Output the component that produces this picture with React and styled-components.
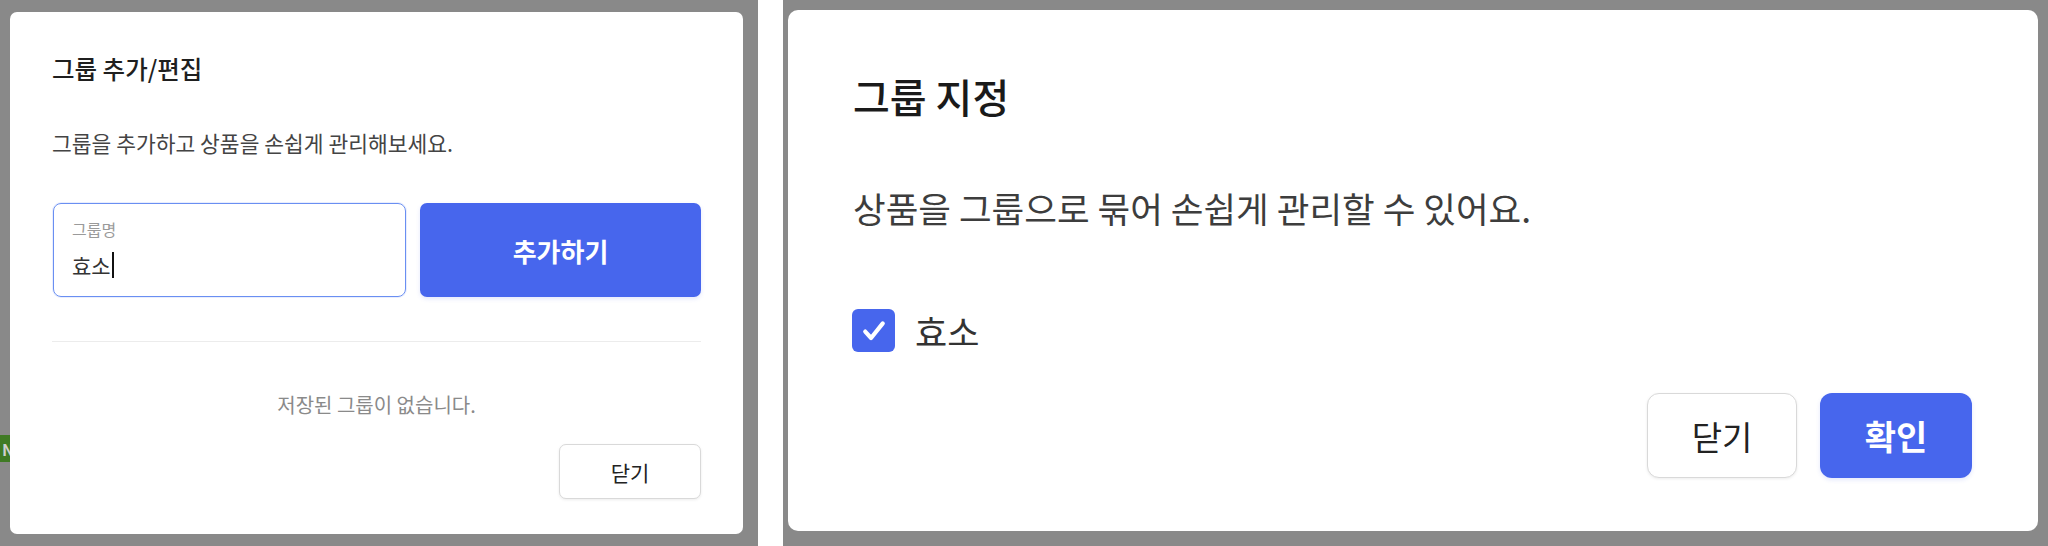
import styled, { createGlobalStyle } from 'styled-components';

const GlobalStyle = createGlobalStyle`
    * { box-sizing: border-box; }
    body {
        margin: 0;
        font-family: "Noto Sans CJK KR", "Noto Sans", sans-serif;
        background: #fff;
    }
`;

const FONT = `"Noto Sans CJK KR", "Noto Sans", sans-serif`;
const BLUE = '#4766ed';

const App = () => {
    return (
        <>
        <GlobalStyle />
        <Page>
            <Backdrop $pad="12px 15px 12px 10px" $width="758px">
                <Behind $left="-6px" $top="435px"><GreenBadge>N</GreenBadge></Behind>

                <EditDialog>
                    <SmallTitle>그룹 추가/편집</SmallTitle>
                    <SmallDesc>그룹을 추가하고 상품을 손쉽게 관리해보세요.</SmallDesc>
                    <InputRow>
                        <FakeInput>
                            <InputLabel>그룹명</InputLabel>
                            <InputValue>효소<Caret /></InputValue>
                        </FakeInput>
                        <PrimaryButton $size="26px" $radius="7px">추가하기</PrimaryButton>
                    </InputRow>
                    <Divider />
                    <EmptyText>저장된 그룹이 없습니다.</EmptyText>
                    <Footer $gap="0">
                        <GhostButton $w="142px" $h="55px" $size="21px" $radius="7px">닫기</GhostButton>
                    </Footer>
                </EditDialog>
            </Backdrop>

            <Strip />

            <Backdrop $pad="10px 10px 15px 5px" $width="1265px">
                <AssignDialog>
                    <BigTitle>그룹 지정</BigTitle>
                    <BigDesc>상품을 그룹으로 묶어 손쉽게 관리할 수 있어요.</BigDesc>
                    <CheckRow>
                        <CheckBox>
                            <svg width="28" height="28" viewBox="0 0 24 24" fill="none">
                                <path d="M4.5 12.5 L9.5 18 L19.5 5.5" stroke="#fff" strokeWidth="3.6" strokeLinecap="round" strokeLinejoin="round" />
                            </svg>
                        </CheckBox>
                        <CheckLabel>효소</CheckLabel>
                    </CheckRow>
                    <Footer $gap="23px" $top="41px">
                        <GhostButton $w="150px" $h="85px" $size="33px" $radius="12px">닫기</GhostButton>
                        <PrimaryButton as="button" $w="152px" $h="85px" $size="34px" $radius="12px">확인</PrimaryButton>
                    </Footer>
                </AssignDialog>
            </Backdrop>
        </Page>
        </>
    )
}

const Page = styled.div`
    display: flex;
    width: 2048px;
    height: 546px;
    overflow: hidden;
`;

const Backdrop = styled.div`
    position: relative;
    flex: 0 0 ${p => p.$width};
    height: 546px;
    padding: ${p => p.$pad};
    background: #898989;
    display: flex;
    overflow: hidden;
`;

const Strip = styled.div`
    flex: 0 0 25px;
    background: #fff;
`;

const Behind = styled.div`
    position: absolute;
    left: ${p => p.$left};
    top: ${p => p.$top};
`;

const GreenBadge = styled.span`
    display: inline-flex;
    align-items: center;
    justify-content: center;
    width: 28px;
    height: 27px;
    background: #3f7a24;
    color: #cfcfcf;
    font: 700 16px ${FONT};
`;

const Dialog = styled.div`
    position: relative;
    z-index: 1;
    flex: 1;
    background: #fff;
    border-radius: 7px;
    display: flex;
    flex-direction: column;
    font-family: ${FONT};
`;

const EditDialog = styled(Dialog)`
    padding: 40px 42px 35px;
`;

const AssignDialog = styled(Dialog)`
    padding: 62px 66px 53px 65px;
    border-radius: 10px;
`;

const SmallTitle = styled.h2`
    margin: 0;
    font-size: 24.5px;
    line-height: 34px;
    font-weight: 500;
    color: #1f1f1f;
`;

const SmallDesc = styled.p`
    margin: 43px 0 0;
    font-size: 21.5px;
    line-height: 28px;
    color: #444;
`;

const InputRow = styled.div`
    margin-top: 46px;
    display: flex;
    gap: 14px;
    height: 94px;
`;

const FakeInput = styled.div`
    flex: 0 0 353px;
    margin-left: 1px;
    border: 1.5px solid #6a8ff2;
    border-radius: 8px;
    padding: 12px 18px 0;
    display: flex;
    flex-direction: column;
    box-shadow: 0 0 0 1px rgba(106, 143, 242, 0.15);
`;

const InputLabel = styled.span`
    font-size: 16px;
    line-height: 26px;
    color: #9a9a9a;
`;

const InputValue = styled.span`
    margin-top: 8px;
    display: flex;
    align-items: center;
    font-size: 21px;
    line-height: 30px;
    color: #333;
`;

const Caret = styled.i`
    display: inline-block;
    width: 2px;
    height: 26px;
    margin-left: 1px;
    background: #111;
`;

const PrimaryButton = styled.div`
    flex: ${p => (p.$w ? `0 0 ${p.$w}` : 1)};
    height: ${p => p.$h || 'auto'};
    border: 0;
    border-radius: ${p => p.$radius};
    background: ${BLUE};
    color: #fff;
    font-family: ${FONT};
    font-size: ${p => p.$size};
    font-weight: 700;
    display: flex;
    align-items: center;
    justify-content: center;
    box-shadow: 0 2px 4px rgba(71, 102, 237, 0.15);
`;

const GhostButton = styled.button`
    flex: 0 0 ${p => p.$w};
    height: ${p => p.$h};
    padding: 0;
    border: 1px solid #d9d9d9;
    border-radius: ${p => p.$radius};
    background: #fff;
    color: #222;
    font-family: ${FONT};
    font-size: ${p => p.$size};
    box-shadow: 0 1px 3px rgba(0, 0, 0, 0.08);
`;

const Divider = styled.hr`
    margin: 44px 0 0;
    border: 0;
    border-top: 1px solid #ececec;
`;

const EmptyText = styled.p`
    margin: 50px 0 0;
    text-align: center;
    font-size: 20px;
    line-height: 26px;
    color: #8a8a8a;
`;

const Footer = styled.div`
    margin-top: ${p => p.$top || '26px'};
    display: flex;
    justify-content: flex-end;
    gap: ${p => p.$gap};
`;

const BigTitle = styled.h2`
    margin: 0;
    font-size: 40px;
    line-height: 48px;
    font-weight: 500;
    color: #1a1a1a;
`;

const BigDesc = styled.p`
    margin: 66px 0 0;
    font-size: 35.5px;
    line-height: 44px;
    color: #3d3d3d;
`;

const CheckRow = styled.label`
    margin-top: 79px;
    display: flex;
    align-items: center;
    gap: 20px;
    height: 43px;
`;

const CheckBox = styled.span`
    width: 43px;
    height: 43px;
    margin-left: -1px;
    border-radius: 6px;
    background: ${BLUE};
    display: flex;
    align-items: center;
    justify-content: center;
`;

const CheckLabel = styled.span`
    font-size: 35px;
    color: #333;
`;

export default App;
